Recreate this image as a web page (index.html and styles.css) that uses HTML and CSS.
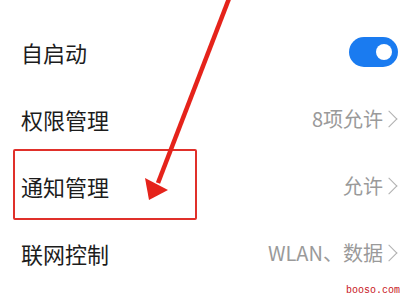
FILE: index.html
```html
<!DOCTYPE html>
<html lang="zh-CN">
<head>
<meta charset="utf-8">
<link rel="stylesheet" href="styles.css">
</head>
<body>
<div class="screen">
  <div class="list">
    <div class="row">
      <span class="label">自启动</span>
      <span class="toggle"><span class="knob"></span></span>
    </div>
    <div class="row">
      <span class="label">权限管理</span>
      <span class="value">8项允许<span class="chev"></span></span>
    </div>
    <div class="row">
      <span class="label">通知管理</span>
      <span class="value">允许<span class="chev"></span></span>
    </div>
    <div class="row">
      <span class="label">联网控制</span>
      <span class="value">WLAN、数据<span class="chev"></span></span>
    </div>
  </div>
  <div class="highlight"></div>
  <svg class="arrow" width="400" height="300" viewBox="0 0 400 300">
    <line x1="230" y1="-4" x2="158" y2="183" stroke="#e5231b" stroke-width="4.5"/>
    <polygon points="145,178 168,190 149,200" fill="#e5231b"/>
  </svg>
  <div class="watermark">booso.com</div>
</div>
</body>
</html>
```
FILE: styles.css
```css
html, body {
  margin: 0;
  padding: 0;
  background: #ffffff;
}
.screen {
  position: relative;
  width: 400px;
  height: 300px;
  overflow: hidden;
  background: #ffffff;
  font-family: "Noto Sans CJK SC", "Noto Sans", sans-serif;
}
.list {
  display: flex;
  flex-direction: column;
  padding-top: 18px;
}
.row {
  height: 67px;
  display: flex;
  align-items: center;
  justify-content: space-between;
  padding-left: 21px;
}
.label {
  font-size: 22px;
  color: #1c1c1c;
  line-height: 1;
}
.value {
  display: flex;
  align-items: center;
  font-size: 20px;
  color: #9a9a9a;
  line-height: 1;
  margin-right: 5px;
}
.chev {
  display: inline-block;
  flex: none;
  width: 12px;
  height: 12px;
  box-sizing: border-box;
  border-top: 1.6px solid #b0b0b0;
  border-right: 1.6px solid #b0b0b0;
  transform: rotate(45deg);
  margin-left: 0;
}
.toggle {
  position: relative;
  width: 49px;
  height: 30px;
  border-radius: 15px;
  background: #1a7bf0;
  margin-right: 2px;
}
.knob {
  position: absolute;
  right: 6px;
  top: 7px;
  width: 16px;
  height: 16px;
  border-radius: 50%;
  background: #ffffff;
}
.highlight {
  position: absolute;
  left: 13px;
  top: 149px;
  width: 180px;
  height: 67px;
  border: 2.5px solid #e0302a;
  border-radius: 2px;
}
.arrow {
  position: absolute;
  left: 0;
  top: 0;
}
.watermark {
  position: absolute;
  right: 0;
  top: 286px;
  font-family: "Liberation Mono", monospace;
  font-size: 10px;
  line-height: 1;
  color: #c8161d;
}
```
